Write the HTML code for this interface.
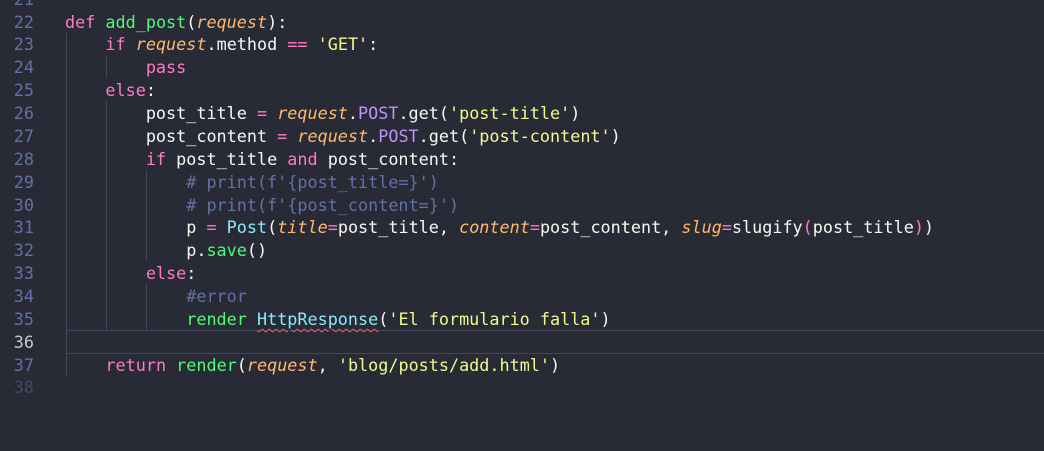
<!DOCTYPE html>
<html><head><meta charset="utf-8"><style>
html,body{margin:0;padding:0;background:#282a36;width:1044px;height:451px;overflow:hidden}
.w{position:relative;width:1044px;height:451px;font-family:"DejaVu Sans Mono","Liberation Mono",monospace;font-size:16.8px;color:#f8f8f2}
.l{position:absolute;left:0;height:22.87px;line-height:22.87px;white-space:pre;width:1044px}
.n{position:absolute;left:0;width:34px;text-align:right;color:#6272a4}
.c{position:absolute;left:65px}
.k{color:#ff79c6}.f{color:#50fa7b}.p{color:#ffb86c;font-style:italic}.s{color:#f1fa8c}.y{color:#8be9fd}.v{color:#bd93f9}.m{color:#6272a4}
.g{position:absolute;width:1px;background:#44475a}
.cur{position:absolute;left:66px;right:0;top:330px;height:22px;border-top:1.5px solid #44475a;border-bottom:1.5px solid #44475a}
.sq{text-decoration:underline wavy #ff5555;text-decoration-thickness:1px;text-underline-offset:3px}
</style></head><body><div class="w">
<div class="cur"></div>
<div class="g" style="left:66px;top:33px;height:343px"></div>
<div class="g" style="left:106px;top:56px;height:22px"></div>
<div class="g" style="left:106px;top:101px;height:229px"></div>
<div class="g" style="left:146px;top:170px;height:91px"></div>
<div class="g" style="left:146px;top:284px;height:46px"></div>
<div class="l" style="top:-12.4px"><span class="n">21</span></div>
<div class="l" style="top:10.5px"><span class="n">22</span><span class="c"><span class="k">def</span> <span class="f">add_post</span>(<span class="p">request</span>):</span></div>
<div class="l" style="top:33.4px"><span class="n">23</span><span class="c">    <span class="k">if</span> <span class="p">request</span>.method <span class="k">==</span> <span class="s">'GET'</span>:</span></div>
<div class="l" style="top:56.2px"><span class="n">24</span><span class="c">        <span class="k">pass</span></span></div>
<div class="l" style="top:79.1px"><span class="n">25</span><span class="c">    <span class="k">else</span>:</span></div>
<div class="l" style="top:102px"><span class="n">26</span><span class="c">        post_title <span class="k">=</span> <span class="p">request</span>.<span class="v">POST</span>.get(<span class="s">'post-title'</span>)</span></div>
<div class="l" style="top:124.9px"><span class="n">27</span><span class="c">        post_content <span class="k">=</span> <span class="p">request</span>.<span class="v">POST</span>.get(<span class="s">'post-content'</span>)</span></div>
<div class="l" style="top:147.7px"><span class="n">28</span><span class="c">        <span class="k">if</span> post_title <span class="k">and</span> post_content:</span></div>
<div class="l" style="top:170.6px"><span class="n">29</span><span class="c">            <span class="m"># print(f'{post_title=}')</span></span></div>
<div class="l" style="top:193.5px"><span class="n">30</span><span class="c">            <span class="m"># print(f'{post_content=}')</span></span></div>
<div class="l" style="top:216.3px"><span class="n">31</span><span class="c">            p <span class="k">=</span> <span class="y">Post</span>(<span class="p">title</span><span class="k">=</span>post_title, <span class="p">content</span><span class="k">=</span>post_content, <span class="p">slug</span><span class="k">=</span>slugify<span class="k">(</span>post_title<span class="k">)</span>)</span></div>
<div class="l" style="top:239.2px"><span class="n">32</span><span class="c">            p.<span class="f">save</span>()</span></div>
<div class="l" style="top:262.1px"><span class="n">33</span><span class="c">        <span class="k">else</span>:</span></div>
<div class="l" style="top:284.9px"><span class="n">34</span><span class="c">            <span class="m">#error</span></span></div>
<div class="l" style="top:307.8px"><span class="n">35</span><span class="c">            <span class="f">render</span> <span class="y sq">HttpResponse</span>(<span class="s">'El formulario falla'</span>)</span></div>
<div class="l" style="top:330.7px"><span class="n" style="color:#c8c8c8">36</span></div>
<div class="l" style="top:353.5px"><span class="n">37</span><span class="c">    <span class="k">return</span> <span class="f">render</span>(<span class="p">request</span>, <span class="s">'blog/posts/add.html'</span>)</span></div>
<div class="l" style="top:376.4px"><span class="n" style="color:#444a66">38</span></div>
</div></body></html>
